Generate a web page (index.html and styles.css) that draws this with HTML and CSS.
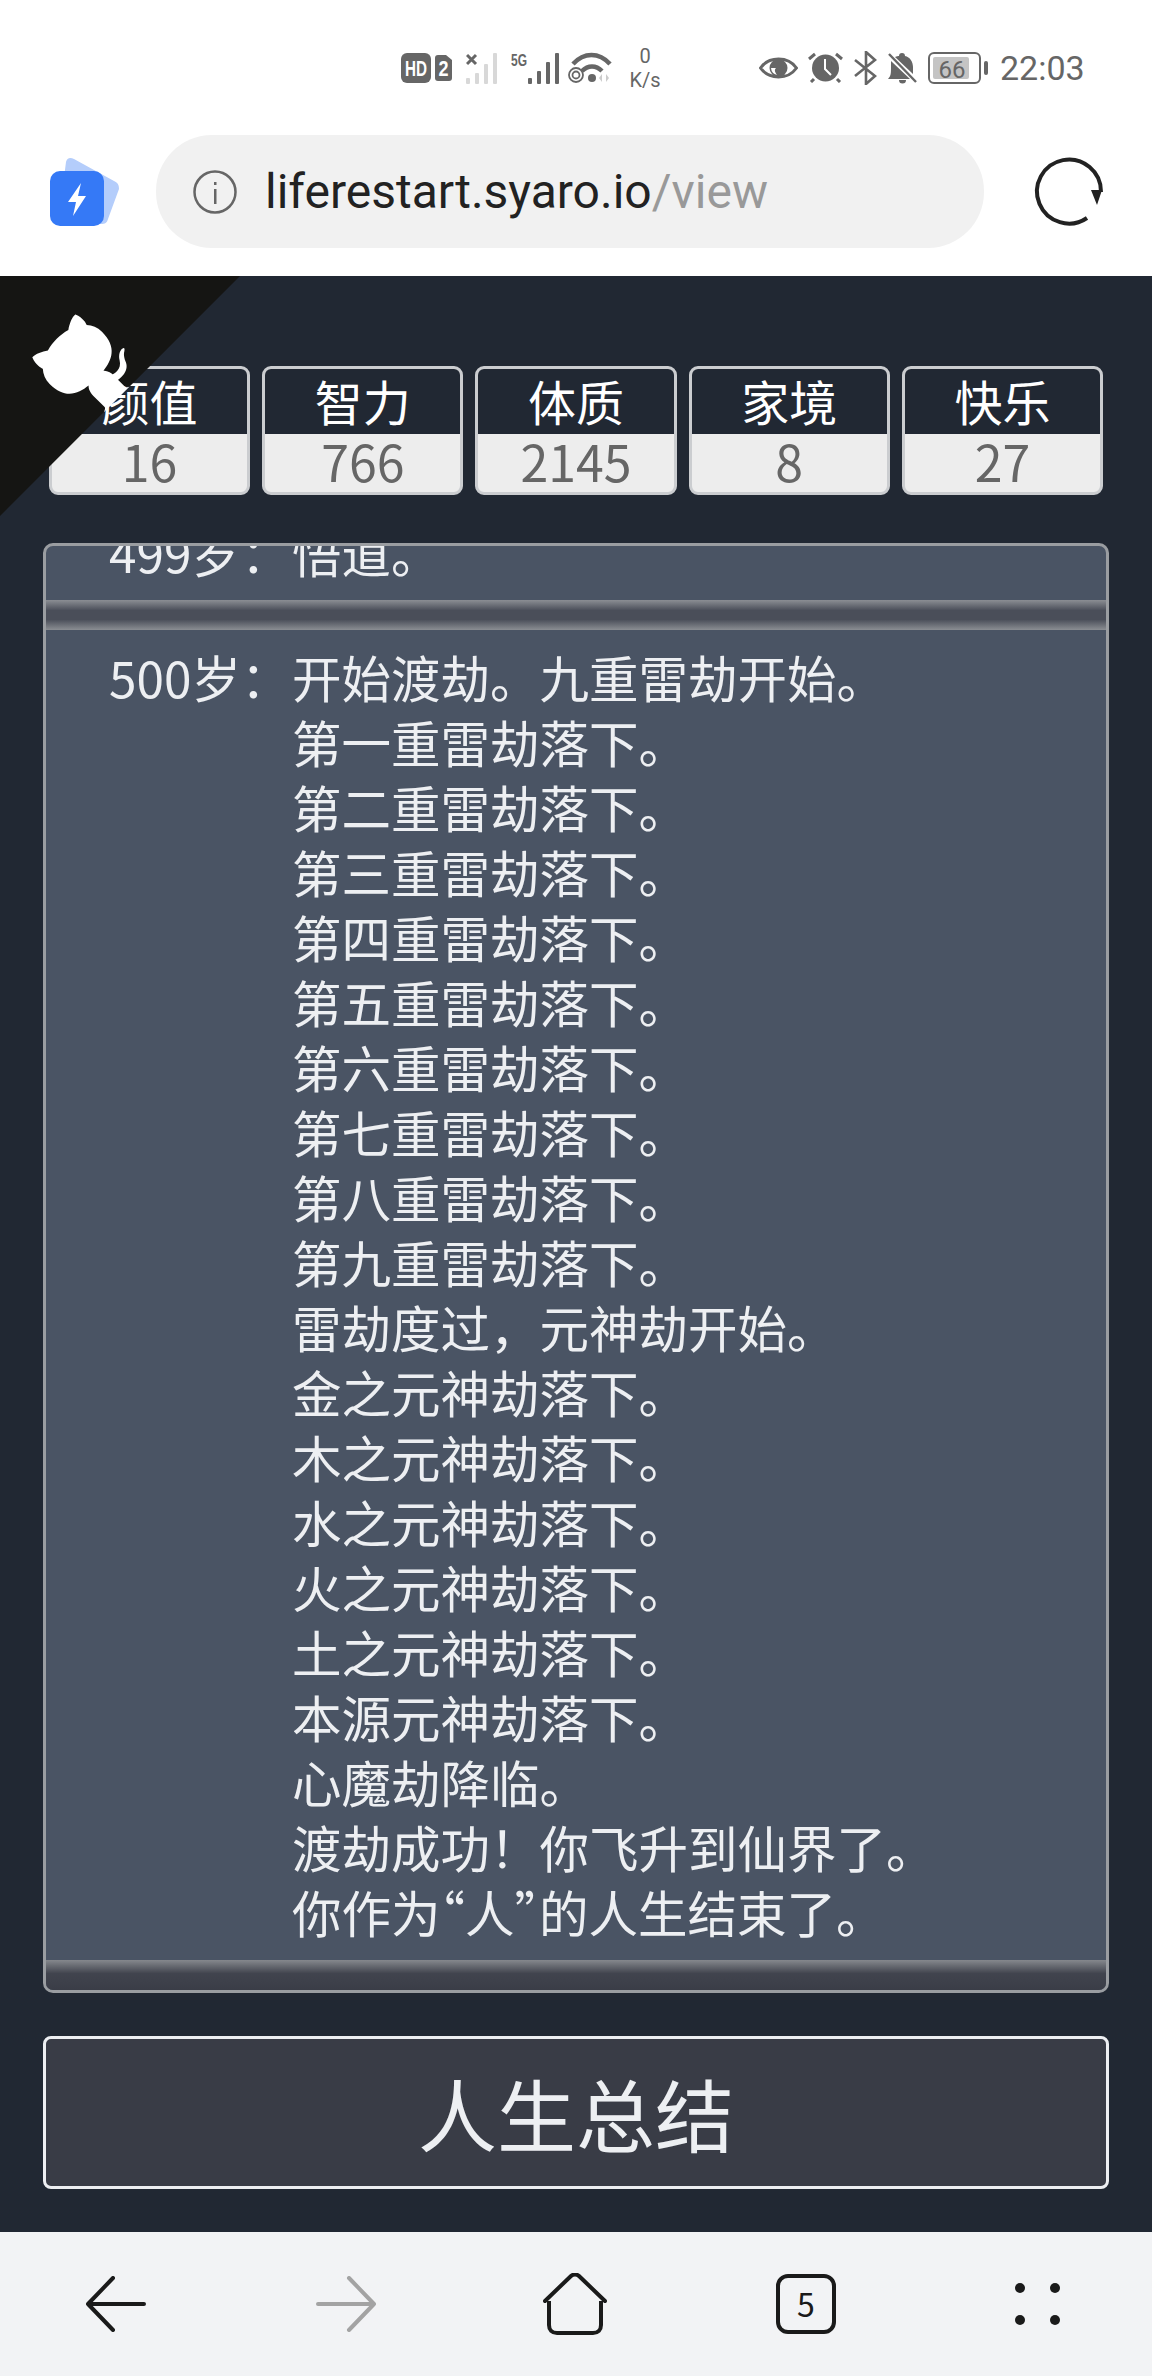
FILE: index.html
```html
<!DOCTYPE html>
<html lang="zh-CN">
<head>
  <meta charset="UTF-8" />
  <meta name="viewport" content="width=device-width, initial-scale=1.0"/>
  <title>人生重开模拟器</title>
  <link rel="stylesheet" href="styles.css">
</head>
<body>

  <div class="status-bar">
    <svg class="icon-net" width="52" height="30" viewBox="0 0 52 30">
      <rect x="0" y="0" width="30" height="30" rx="6" fill="#666"/>
      <text x="4" y="23" class="hd-text" textLength="22" lengthAdjust="spacingAndGlyphs">HD</text>
      <path d="M34 5a3 3 0 0 1 3-3h8l6 5v18a3 3 0 0 1-3 3H37a3 3 0 0 1-3-3z" fill="#666"/>
      <text x="37.5" y="23" class="hd-text" textLength="10" lengthAdjust="spacingAndGlyphs">2</text>
    </svg>
    <svg class="icon-sig1" width="34" height="32" viewBox="0 0 34 32">
      <g fill="#d8d8d8">
        <rect x="0" y="26" width="4" height="6" rx="1"/>
        <rect x="9" y="21" width="4" height="11" rx="1"/>
        <rect x="18" y="12" width="4" height="20" rx="1"/>
        <rect x="27" y="1" width="4" height="31" rx="1"/>
      </g>
      <path d="M1 3l9 9M10 3l-9 9" stroke="#666" stroke-width="3"/>
    </svg>
    <svg class="icon-sig2" width="50" height="32" viewBox="0 0 50 32">
      <text x="0" y="14" class="fiveg-text" textLength="16" lengthAdjust="spacingAndGlyphs">5G</text>
      <g fill="#666">
        <rect x="17" y="26" width="4" height="6" rx="1"/>
        <rect x="26" y="19" width="4" height="13" rx="1"/>
        <rect x="35" y="10" width="4" height="22" rx="1"/>
        <rect x="44" y="1" width="4" height="31" rx="1"/>
      </g>
    </svg>
    <svg class="icon-wifi" width="46" height="33" viewBox="0 0 46 33">
      <g fill="none" stroke="#666">
        <path d="M5 13C16 1 31 1 42 13" stroke-width="4.5"/>
        <path d="M14 20c6-6 14-6 20 0" stroke-width="4.5"/>
        <circle cx="8" cy="24" r="7" stroke-width="1.8"/>
        <circle cx="8" cy="24" r="3.5" stroke-width="1.8"/>
      </g>
      <circle cx="24" cy="27" r="4" fill="#666"/>
      <path d="M34 23v8l-3-4zM38 23v8l3-4z" fill="#ccc"/>
    </svg>
    <div class="net-speed"><span>0</span><span>K/s</span></div>
    <svg class="icon-eye" width="39" height="26" viewBox="0 0 39 26">
      <path d="M1.5 13C10 1 29 1 37.5 13 29 25 10 25 1.5 13z" fill="none" stroke="#666" stroke-width="3"/>
      <circle cx="19.5" cy="13" r="9" fill="#666"/>
      <path d="M12 13a8 8 0 0 0 6 7c-2-3-3-5-1-7z" fill="#fff"/>
    </svg>
    <svg class="icon-alarm" width="35" height="31" viewBox="0 0 35 31">
      <circle cx="17.5" cy="16" r="13.5" fill="#666"/>
      <path d="M17 7v10l6 6" fill="none" stroke="#fff" stroke-width="2"/>
      <path d="M1 7l6-5M34 7l-6-5M6 27l-3 3M29 27l3 3" stroke="#666" stroke-width="3" fill="none"/>
    </svg>
    <svg class="icon-bt" width="23" height="34" viewBox="0 0 23 34">
      <path d="M1 9l20 16-9 8V1l9 8L1 25" fill="none" stroke="#666" stroke-width="2.6"/>
    </svg>
    <svg class="icon-bell" width="31" height="32" viewBox="0 0 31 32">
      <path d="M15 1c2 0 3 1 3 3 5 1 8 6 8 11v7L8 5c2-1 3-1 4-1 0-2 1-3 3-3zM4 9l19 18H1c3-3 3-6 3-12z" fill="#666"/>
      <path d="M12 28h7a3.5 3.5 0 0 1-7 0z" fill="#666"/>
      <path d="M2 2l27 28" stroke="#666" stroke-width="2.4"/>
    </svg>
    <svg class="icon-battery" width="60" height="32" viewBox="0 0 60 32">
      <rect x="1" y="1" width="51" height="30" rx="5" fill="#fff" stroke="#666" stroke-width="2"/>
      <rect x="5" y="5" width="36" height="22" rx="2" fill="#c4c4c4"/>
      <text x="24" y="26" class="batt-text" text-anchor="middle">66</text>
      <rect x="56" y="9" width="4" height="14" rx="2" fill="#666"/>
    </svg>
    <div class="clock">22:03</div>
  </div>

  <div class="url-row">
    <svg class="quick-icon" width="75" height="70" viewBox="0 0 75 70">
      <path d="M20 6c1-4 4-5 8-3l40 22c4 2 5 4 5 8l-11 30c-1 4-3 5-7 5H12z" fill="#b4cdfb"/>
      <rect x="4" y="15" width="54" height="55" rx="10" fill="#3579f6"/>
      <path d="M35 27L22 46h8l-3 14 13-20h-8z" fill="#fff"/>
    </svg>
    <div class="url-bar">
      <svg width="44" height="44" viewBox="0 0 44 44">
        <circle cx="22" cy="22" r="20.5" fill="none" stroke="#666" stroke-width="2.5"/>
        <rect x="21" y="19" width="2.5" height="15" fill="#666"/>
        <rect x="21" y="12" width="2.5" height="3" fill="#666"/>
      </svg>
      <div class="url-text">liferestart.syaro.io<span>/view</span></div>
    </div>
    <svg class="reload-icon" width="68" height="70" viewBox="0 0 68 70">
      <path d="M51 61A32 32 0 1 1 65 35" fill="none" stroke="#222" stroke-width="4"/>
      <path d="M55 33h11l-5 15z" fill="#222"/>
    </svg>
  </div>

  <div class="page">
    <div class="stats">
      <div class="stat"><div class="stat-name">颜值</div><div class="stat-value">16</div></div>
      <div class="stat"><div class="stat-name">智力</div><div class="stat-value">766</div></div>
      <div class="stat"><div class="stat-name">体质</div><div class="stat-value">2145</div></div>
      <div class="stat"><div class="stat-name">家境</div><div class="stat-value">8</div></div>
      <div class="stat"><div class="stat-name">快乐</div><div class="stat-value">27</div></div>
    </div>

    <div class="trajectory">
      <div class="year">
        <div class="age">499岁：</div>
        <div class="events"><div>悟道。</div></div>
      </div>
      <div class="year">
        <div class="age">500岁：</div>
        <div class="events">
          <div>开始渡劫。九重雷劫开始。</div>
          <div>第一重雷劫落下。</div>
          <div>第二重雷劫落下。</div>
          <div>第三重雷劫落下。</div>
          <div>第四重雷劫落下。</div>
          <div>第五重雷劫落下。</div>
          <div>第六重雷劫落下。</div>
          <div>第七重雷劫落下。</div>
          <div>第八重雷劫落下。</div>
          <div>第九重雷劫落下。</div>
          <div>雷劫度过，元神劫开始。</div>
          <div>金之元神劫落下。</div>
          <div>木之元神劫落下。</div>
          <div>水之元神劫落下。</div>
          <div>火之元神劫落下。</div>
          <div>土之元神劫落下。</div>
          <div>本源元神劫落下。</div>
          <div>心魔劫降临。</div>
          <div>渡劫成功！你飞升到仙界了。</div>
          <div>你作为<span class="quote-open">“</span>人<span class="quote-close">”</span>的人生结束了。</div>
        </div>
      </div>
    </div>

    <button class="summary-btn">人生总结</button>

    <!-- github corner -->
    <svg class="corner" width="240" height="240" viewBox="0 0 250 250">
      <path fill="#151513" d="M0,0 L115,115 L130,115 L142,142 L250,250 L250,0 Z"/>
      <path fill="#fff" d="M128.3,109.0 C113.8,99.7 119.0,89.6 119.0,89.6 C122.0,82.7 120.5,78.6 120.5,78.6 C119.2,72.0 123.4,76.3 123.4,76.3 C127.3,80.9 125.5,87.3 125.5,87.3 C122.9,97.6 130.6,101.9 134.4,103.2"/>
      <path fill="#fff" d="M115.0,115.0 C114.9,115.1 118.7,116.5 119.8,115.4 L133.7,101.6 C136.9,99.2 139.9,98.4 142.2,98.6 C133.8,88.0 127.5,74.4 143.8,58.0 C148.5,53.4 154.0,51.2 159.7,51.0 C160.3,49.4 163.2,43.6 171.4,40.1 C171.4,40.1 176.1,42.5 178.8,56.2 C183.1,58.6 187.2,61.8 190.9,65.4 C194.5,69.0 197.7,73.2 200.1,77.6 C213.8,80.2 216.3,84.9 216.3,84.9 C212.7,93.1 206.9,96.0 205.4,96.6 C205.1,102.4 203.0,107.8 198.3,112.5 C181.9,128.9 168.3,122.5 157.7,114.1 C157.9,116.9 156.7,120.9 152.7,124.9 L141.0,136.5 C139.8,137.7 141.6,141.9 141.8,141.8 Z"/>
    </svg>
  </div>

  <div class="nav-bar">
    <svg width="60" height="56" viewBox="0 0 60 56">
      <path d="M2 28h56M27 2L2 28l25 26" fill="none" stroke="#1a1a1a" stroke-width="4" stroke-linecap="round" stroke-linejoin="round"/>
    </svg>
    <svg width="60" height="56" viewBox="0 0 60 56">
      <path d="M2 28h56M33 2l25 26-25 26" fill="none" stroke="#a3a3a3" stroke-width="4" stroke-linecap="round" stroke-linejoin="round"/>
    </svg>
    <svg width="64" height="62" viewBox="0 0 64 62">
      <path d="M2 28L28 3c2-2 6-2 8 0l26 25" fill="none" stroke="#1a1a1a" stroke-width="4" stroke-linecap="round"/>
      <path d="M6 28v24c0 5 3 8 8 8h36c5 0 8-3 8-8V28" fill="none" stroke="#1a1a1a" stroke-width="4"/>
    </svg>
    <div class="tab-count">5</div>
    <div class="menu-dots"><i></i><i></i><i></i><i></i></div>
  </div>

</body>
</html>
```

FILE: styles.css
```css
body, html {
  margin: 0;
  padding: 0;
  height: 100%;
  font-family: "Noto Sans CJK SC", sans-serif;
}

body {
  display: flex;
  flex-direction: column;
  background-color: #fff;
}

.status-bar {
  height: 135px;
  box-sizing: border-box;
  padding-left: 401px;
  display: flex;
  align-items: center;
  color: #666;
  font-family: Roboto, sans-serif;
}

.hd-text {
  fill: #fff;
  font-size: 22px;
  font-weight: bold;
  font-family: "Liberation Sans", sans-serif;
}

.fiveg-text {
  fill: #666;
  font-size: 17px;
  font-weight: bold;
  font-family: "Liberation Sans", sans-serif;
}

.batt-text {
  fill: #666;
  font-size: 24px;
  font-family: Roboto, sans-serif;
}

.icon-sig1 { margin-left: 13px; }
.icon-sig2 { margin-left: 11px; }
.icon-wifi { margin-left: 7px; }
.icon-alarm { margin-left: 10px; }
.icon-bt { margin-left: 11px; }
.icon-bell { margin-left: 10px; }
.icon-battery { margin-left: 10px; }

.net-speed {
  width: 80px;
  margin: 0 74px 0 -9px;
  display: flex;
  flex-direction: column;
  align-items: center;
  font-size: 20px;
  line-height: 24px;
}

.clock {
  margin-left: 12px;
  font-size: 34px;
}

.url-row {
  height: 141px;
  display: flex;
  align-items: flex-start;
}

.quick-icon {
  margin: 21px 0 0 46px;
}

.url-bar {
  width: 828px;
  height: 113px;
  margin-left: 35px;
  box-sizing: border-box;
  padding-left: 37px;
  display: flex;
  align-items: center;
  gap: 28px;
  border-radius: 56px;
  background-color: #f1f1f1;
}

.url-text {
  font-family: Roboto, sans-serif;
  font-size: 48px;
  color: #222;
  white-space: nowrap;
}

.url-text span {
  color: #999;
}

.reload-icon {
  margin: 22px 0 0 52px;
  overflow: visible;
}

.page {
  flex: 1;
  min-height: 0;
  position: relative;
  box-sizing: border-box;
  padding: 90px 43px 43px;
  display: flex;
  flex-direction: column;
  background-color: #212833;
}

.stats {
  margin: 0 6px;
  display: grid;
  grid-template-columns: repeat(5, 1fr);
  gap: 12px;
}

.stat {
  border: 3px solid #cbcdd0;
  border-radius: 9px;
  text-align: center;
  background-color: #ededed;
}

.stat-name {
  height: 65px;
  line-height: 62px;
  font-size: 48px;
  color: #fff;
  background-color: #212833;
  border-radius: 6px 6px 0 0;
}

.stat-value {
  height: 58px;
  line-height: 53px;
  font-size: 50px;
  color: #666;
}

.trajectory {
  flex: 1;
  min-height: 0;
  margin-top: 48px;
  border: 3px solid #9a9da1;
  border-radius: 10px;
  overflow: hidden;
  display: flex;
  flex-direction: column;
  justify-content: flex-end;
  background-color: #4a5464;
}

.year {
  flex-shrink: 0;
  margin-bottom: 30px;
  padding: 14px 0 16px 63px;
  position: relative;
  display: flex;
  font-size: 49.5px;
  line-height: 65px;
  color: #edeff2;
}

.year::after {
  content: "";
  display: block;
  position: absolute;
  left: 0;
  right: 0;
  bottom: -30px;
  height: 30px;
  background: linear-gradient(#8b8e93, #4a4e59 35%, #4a4e59 65%, #8b8e93);
}

.year:last-child::after {
  background: linear-gradient(#85888d, #41444e 45%, #3a3d47);
}

.age {
  width: 183px;
  flex-shrink: 0;
}

.quote-open {
  margin-left: -25px;
}

.quote-close {
  margin-right: -25px;
}

.summary-btn {
  height: 153px;
  margin-top: 43px;
  flex-shrink: 0;
  border: 3px solid #edeff2;
  border-radius: 8px;
  background-color: #393c46;
  color: #edeff2;
  font-family: inherit;
  font-size: 79px;
}

.corner {
  position: absolute;
  top: 0;
  left: 0;
  transform: scaleX(-1);
}

.nav-bar {
  height: 144px;
  background-color: #f2f3f5;
  display: flex;
  align-items: center;
  padding-left: 86px;
}

.nav-bar svg:nth-child(2) { margin-left: 170px; }
.nav-bar svg:nth-child(3) { margin-left: 167px; }

.tab-count {
  width: 60px;
  height: 60px;
  box-sizing: border-box;
  margin-left: 169px;
  border: 4px solid #1a1a1a;
  border-radius: 12px;
  text-align: center;
  font-size: 32px;
  line-height: 50px;
  color: #1a1a1a;
}

.menu-dots {
  margin-left: 179px;
  display: grid;
  grid-template-columns: 10px 10px;
  gap: 22px 25px;
}

.menu-dots i {
  width: 10px;
  height: 10px;
  border-radius: 50%;
  background-color: #1a1a1a;
}
```
